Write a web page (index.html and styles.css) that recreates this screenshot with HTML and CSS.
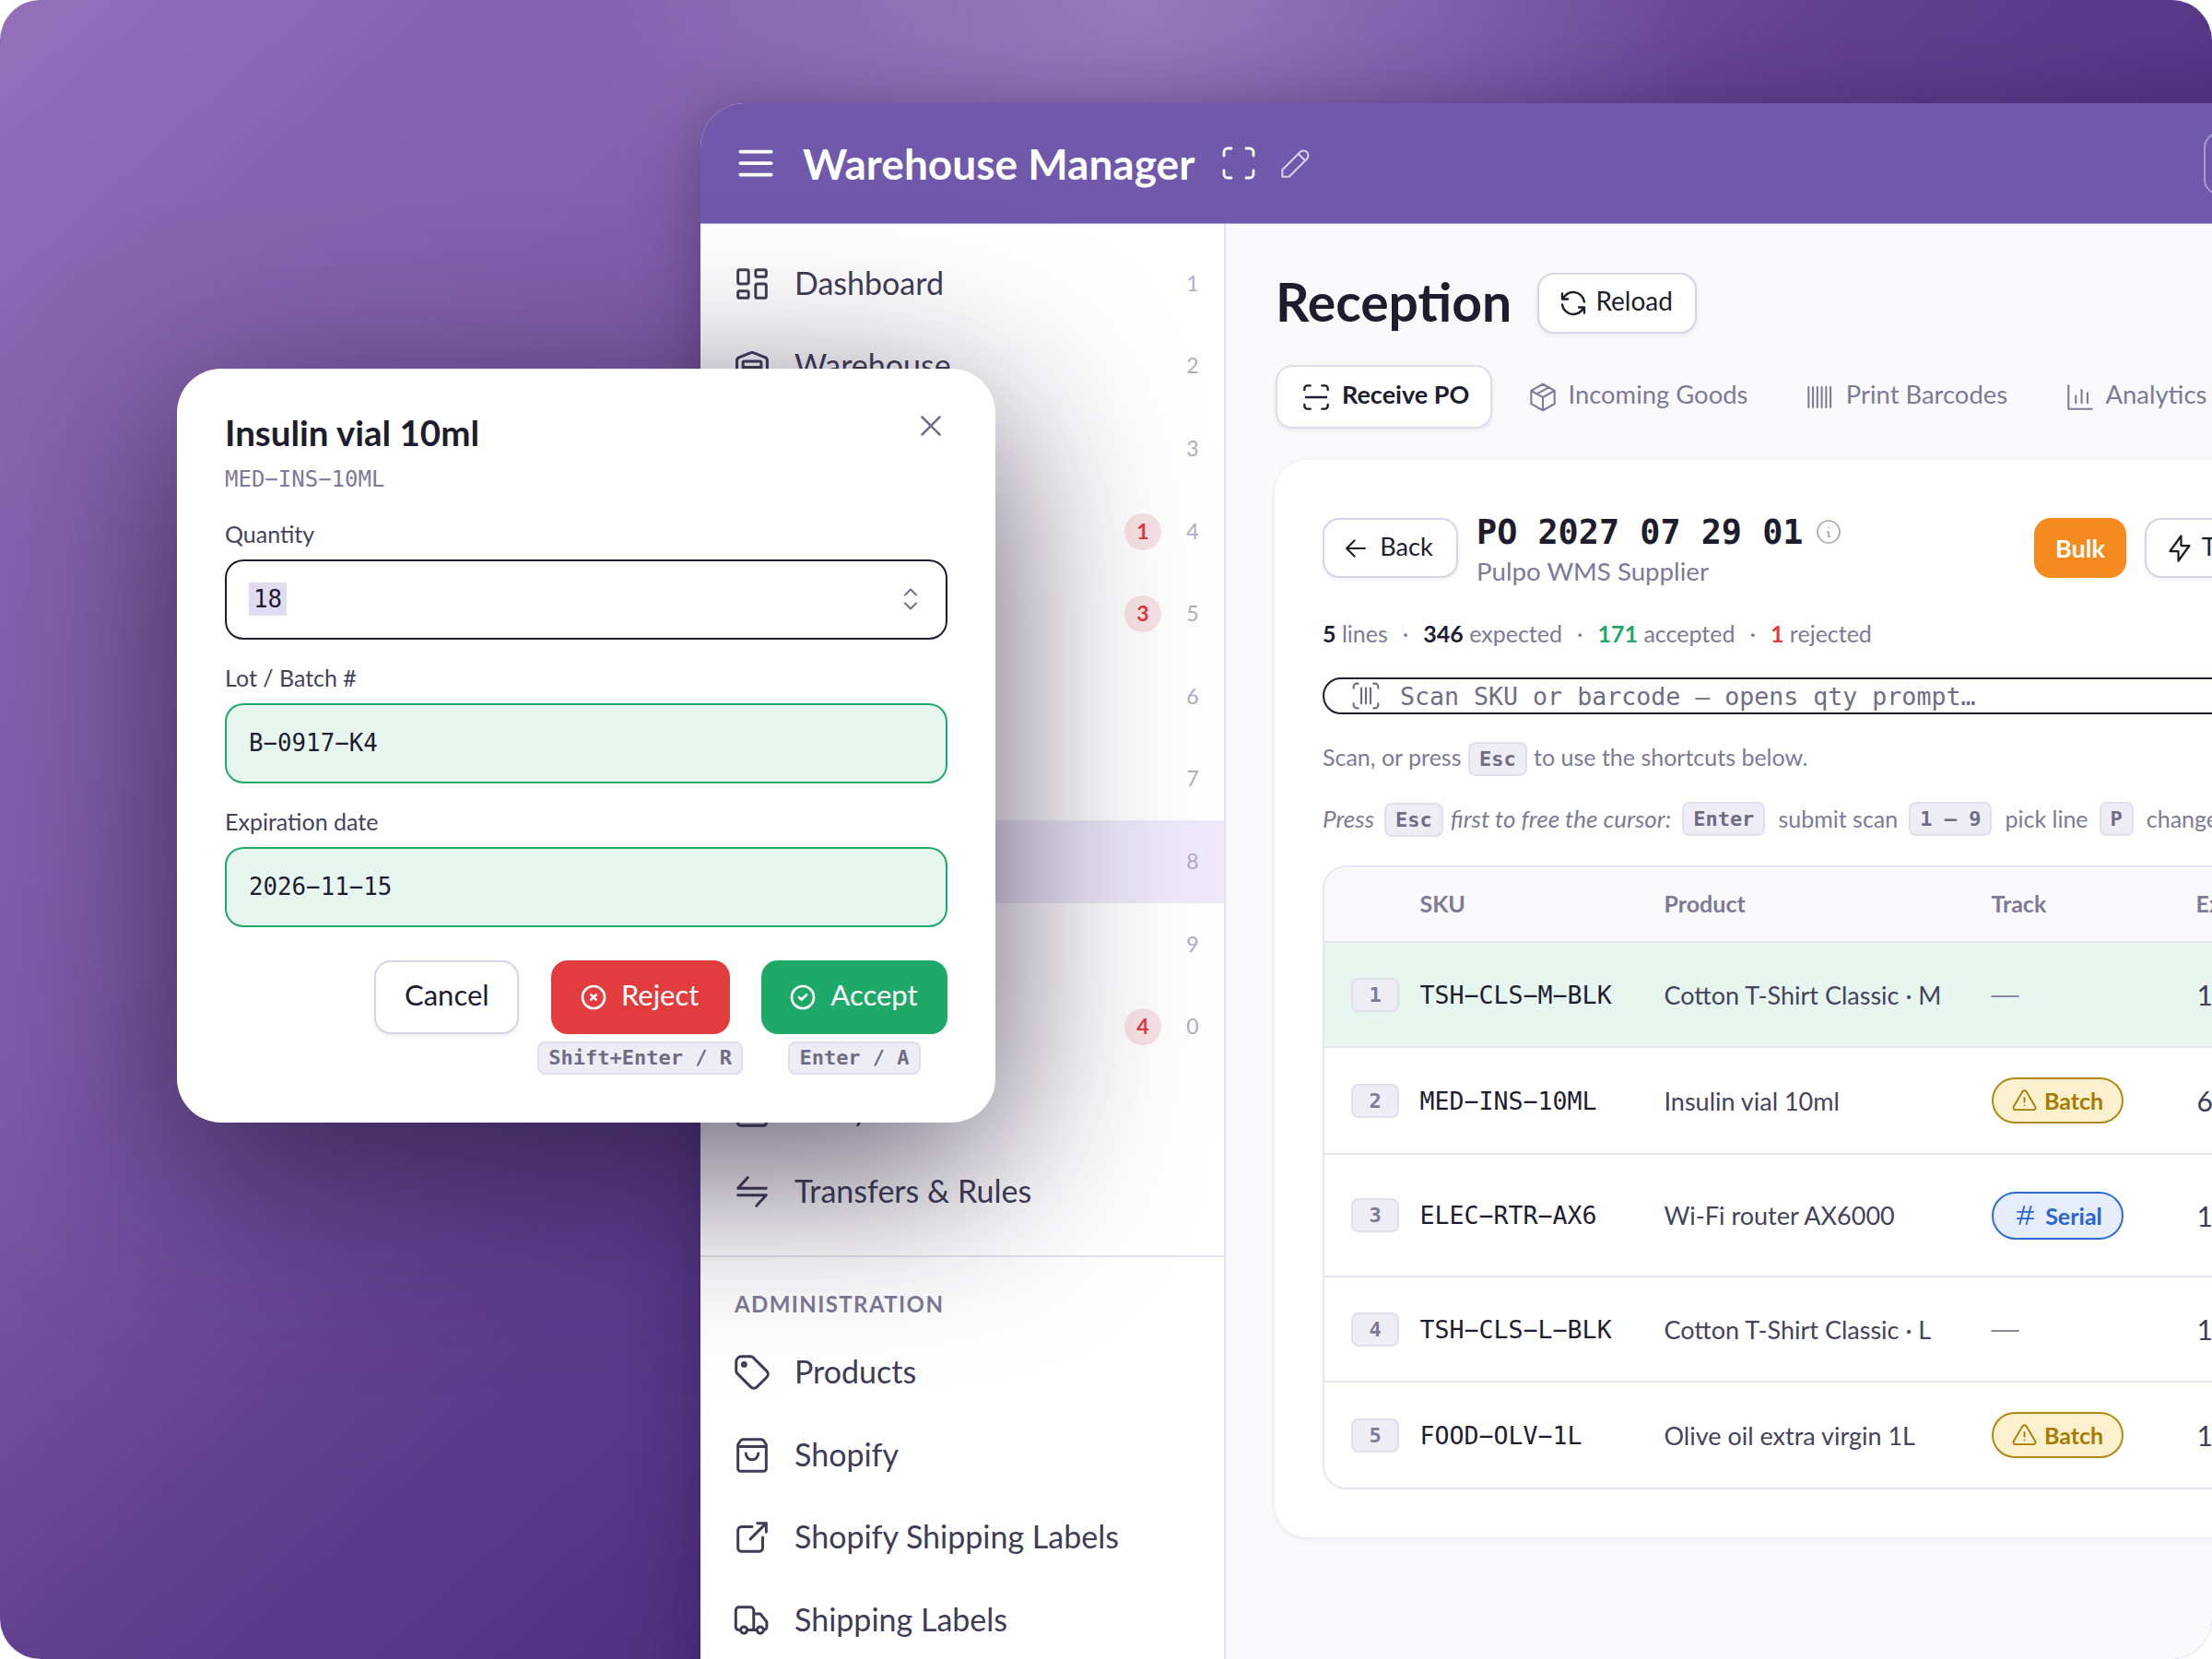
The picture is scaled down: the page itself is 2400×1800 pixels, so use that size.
FILE: index.html
```html
<!DOCTYPE html>
<html lang="en">
<head>
    <meta charset="UTF-8">
    <title>Warehouse Manager - Reception</title>
    <link rel="stylesheet" href="styles.css">
</head>
<body>
    <svg class="sprite" xmlns="http://www.w3.org/2000/svg">
        <symbol id="i-menu" viewBox="0 0 24 24"><path d="M4 6h16M4 12h16M4 18h16"/></symbol>
        <symbol id="i-max" viewBox="0 0 24 24"><path d="M4 8v-2a2 2 0 0 1 2 -2h2M4 16v2a2 2 0 0 0 2 2h2M16 4h2a2 2 0 0 1 2 2v2M16 20h2a2 2 0 0 0 2 -2v-2"/></symbol>
        <symbol id="i-pencil" viewBox="0 0 24 24"><path d="M4 20h4l10.5 -10.5a2.828 2.828 0 1 0 -4 -4l-10.5 10.5v4M13.5 6.5l4 4"/></symbol>
        <symbol id="i-dash" viewBox="0 0 24 24"><path d="M5 4h4a1 1 0 0 1 1 1v6a1 1 0 0 1 -1 1h-4a1 1 0 0 1 -1 -1v-6a1 1 0 0 1 1 -1M5 16h4a1 1 0 0 1 1 1v2a1 1 0 0 1 -1 1h-4a1 1 0 0 1 -1 -1v-2a1 1 0 0 1 1 -1M15 12h4a1 1 0 0 1 1 1v6a1 1 0 0 1 -1 1h-4a1 1 0 0 1 -1 -1v-6a1 1 0 0 1 1 -1M15 4h4a1 1 0 0 1 1 1v2a1 1 0 0 1 -1 1h-4a1 1 0 0 1 -1 -1v-2a1 1 0 0 1 1 -1"/></symbol>
        <symbol id="i-warehouse" viewBox="-2 -2 28 28"><path stroke-width="1.85" d="M18 21V10a1 1 0 0 0-1-1H7a1 1 0 0 0-1 1v11M22 19V8.35a2 2 0 0 0-1.26-1.86l-8-3.2a2 2 0 0 0-1.48 0l-8 3.2A2 2 0 0 0 2 8.35V19a2 2 0 0 0 2 2h16a2 2 0 0 0 2-2ZM6 13h12M6 17h12"/></symbol>
        <symbol id="i-transfer" viewBox="0 0 24 24"><path d="M20 10h-16l5.5 -6M4 14h16l-5.5 6"/></symbol>
        <symbol id="i-tag" viewBox="0 0 24 24"><path d="M6.5 7.5a1 1 0 1 0 2 0a1 1 0 1 0 -2 0M3 6v5.172a2 2 0 0 0 .586 1.414l7.71 7.71a2.41 2.41 0 0 0 3.408 0l5.592 -5.592a2.41 2.41 0 0 0 0 -3.408l-7.71 -7.71a2 2 0 0 0 -1.414 -.586h-5.172a3 3 0 0 0 -3 3z"/></symbol>
        <symbol id="i-bag" viewBox="0 0 24 24"><path d="M7 3h10a2 2 0 0 1 1.700 .9L20 6v13.500a1.500 1.500 0 0 1 -1.500 1.500H5.500a1.500 1.500 0 0 1 -1.500 -1.500V6l1.300 -2.100A2 2 0 0 1 7 3M4 7h16M8.500 11a3.500 3.500 0 0 0 7 0"/></symbol>
        <symbol id="i-external" viewBox="0 0 24 24"><path d="M12 6h-6a2 2 0 0 0 -2 2v10a2 2 0 0 0 2 2h10a2 2 0 0 0 2 -2v-6M11 13l9 -9M15 4h5v5"/></symbol>
        <symbol id="i-truck" viewBox="-1 -1 26 26"><path stroke-width="1.7" d="M5 18a2 2 0 1 0 4 0a2 2 0 1 0 -4 0M15 18a2 2 0 1 0 4 0a2 2 0 1 0 -4 0M5 18h-1a2 2 0 0 1 -2 -2v-10a2 2 0 0 1 2 -2h7a2 2 0 0 1 2 2v12M9 18h6M13 8h4l4 5v3a2 2 0 0 1 -2 2"/></symbol>
        <symbol id="i-refresh" viewBox="0 0 24 24"><path d="M20 11a8.100 8.100 0 0 0 -15.500 -2m-.5 -4v4h4M4 13a8.100 8.100 0 0 0 15.500 2m.5 4v-4h-4"/></symbol>
        <symbol id="i-scan" viewBox="0 0 24 24"><path d="M4 7v-1a2 2 0 0 1 2 -2h2M4 17v1a2 2 0 0 0 2 2h2M16 4h2a2 2 0 0 1 2 2v1M16 20h2a2 2 0 0 0 2 -2v-1M5 12h14"/></symbol>
        <symbol id="i-box" viewBox="0 0 24 24"><path d="M12 3l8 4.500v9l-8 4.500l-8 -4.500v-9l8 -4.500M12 12l8 -4.500M12 12v9M12 12l-8 -4.500M16 5.250l-8 4.500"/></symbol>
        <symbol id="i-barcode" viewBox="0 0 24 24"><path d="M4 5v14M7 5v14M10 5v14M13 5v14M16 5v14M19 5v14"/></symbol>
        <symbol id="i-chart" viewBox="0 0 24 24"><path d="M4 4v16h16M9 16v-5M13 16V7M17 16v-7"/></symbol>
        <symbol id="i-left" viewBox="0 0 24 24"><path d="M5 12h14M5 12l6 6M5 12l6 -6"/></symbol>
        <symbol id="i-info" viewBox="0 0 24 24"><path d="M3 12a9 9 0 1 0 18 0a9 9 0 0 0 -18 0M12 8.500h.01M11 12h1v4h1"/></symbol>
        <symbol id="i-bolt" viewBox="0 0 24 24"><path d="M13 3v7h6l-8 11v-7h-6l8 -11"/></symbol>
        <symbol id="i-codescan" viewBox="0 0 24 24"><path d="M4 7v-1a2 2 0 0 1 2 -2h1M4 17v1a2 2 0 0 0 2 2h1M17 4h1a2 2 0 0 1 2 2v1M17 20h1a2 2 0 0 0 2 -2v-1M9 7v10M12 7v10M15 7v10"/></symbol>
        <symbol id="i-close" viewBox="0 0 24 24"><path d="M18 6l-12 12M6 6l12 12"/></symbol>
        <symbol id="i-updown" viewBox="0 0 24 24"><path d="M8 9l4 -4l4 4M16 15l-4 4l-4 -4"/></symbol>
        <symbol id="i-xcircle" viewBox="0 0 24 24"><path d="M3 12a9 9 0 1 0 18 0a9 9 0 0 0 -18 0M10 10l4 4m0 -4l-4 4"/></symbol>
        <symbol id="i-check" viewBox="0 0 24 24"><path d="M3 12a9 9 0 1 0 18 0a9 9 0 0 0 -18 0M9 12l2 2l4 -4"/></symbol>
        <symbol id="i-alert" viewBox="0 0 24 24"><path d="M12 9v4M10.363 3.591l-8.106 13.534a1.914 1.914 0 0 0 1.636 2.871h16.214a1.914 1.914 0 0 0 1.636 -2.870l-8.106 -13.536a1.914 1.914 0 0 0 -3.274 0zM12 16h.01"/></symbol>
        <symbol id="i-hash" viewBox="0 0 24 24"><path d="M5 9h14M5 15h14M11 4l-4 16M17 4l-4 16"/></symbol>
    </svg>

    <div class="stage">
        <div class="app-window">
            <header class="topbar">
                <svg class="icon topbar-menu"><use href="#i-menu"/></svg>
                <span class="topbar-title">Warehouse Manager</span>
                <svg class="icon topbar-max"><use href="#i-max"/></svg>
                <svg class="icon topbar-edit"><use href="#i-pencil"/></svg>
                <span class="topbar-box"></span>
            </header>

            <div class="app-body">
                <aside class="sidebar">
                    <nav class="nav-main">
                        <a class="nav-row"><svg class="icon"><use href="#i-dash"/></svg><span class="nav-label">Dashboard</span><span class="nav-key">1</span></a>
                        <a class="nav-row"><svg class="icon"><use href="#i-warehouse"/></svg><span class="nav-label">Warehouse</span><span class="nav-key">2</span></a>
                        <a class="nav-row"><span class="nav-label nav-hidden">Stock</span><span class="nav-key">3</span></a>
                        <a class="nav-row"><span class="nav-label nav-hidden">Orders</span><span class="nav-badge">1</span><span class="nav-key">4</span></a>
                        <a class="nav-row"><span class="nav-label nav-hidden">Returns</span><span class="nav-badge">3</span><span class="nav-key">5</span></a>
                        <a class="nav-row"><span class="nav-label nav-hidden">Picking</span><span class="nav-key">6</span></a>
                        <a class="nav-row"><span class="nav-label nav-hidden">Packing</span><span class="nav-key">7</span></a>
                        <a class="nav-row nav-active"><span class="nav-label nav-hidden">Reception</span><span class="nav-key">8</span></a>
                        <a class="nav-row"><span class="nav-label nav-hidden">Counting</span><span class="nav-key">9</span></a>
                        <a class="nav-row"><span class="nav-label nav-hidden">Alerts</span><span class="nav-badge">4</span><span class="nav-key">0</span></a>
                        <a class="nav-row"><svg class="icon"><use href="#i-bag"/></svg><span class="nav-label">Entry</span></a>
                        <a class="nav-row"><svg class="icon"><use href="#i-transfer"/></svg><span class="nav-label">Transfers &amp; Rules</span></a>
                    </nav>
                    <div class="nav-admin">
                        <div class="nav-heading">ADMINISTRATION</div>
                        <a class="nav-row"><svg class="icon"><use href="#i-tag"/></svg><span class="nav-label">Products</span></a>
                        <a class="nav-row"><svg class="icon"><use href="#i-bag"/></svg><span class="nav-label">Shopify</span></a>
                        <a class="nav-row"><svg class="icon"><use href="#i-external"/></svg><span class="nav-label">Shopify Shipping Labels</span></a>
                        <a class="nav-row"><svg class="icon"><use href="#i-truck"/></svg><span class="nav-label">Shipping Labels</span></a>
                    </div>
                </aside>

                <main class="main">
                    <div class="page-head">
                        <h1>Reception</h1>
                        <button class="btn btn-reload"><svg class="icon"><use href="#i-refresh"/></svg>Reload</button>
                    </div>

                    <div class="tabs">
                        <div class="tab tab-active"><svg class="icon"><use href="#i-scan"/></svg>Receive PO</div>
                        <div class="tab"><svg class="icon"><use href="#i-box"/></svg>Incoming Goods</div>
                        <div class="tab"><svg class="icon"><use href="#i-barcode"/></svg>Print Barcodes</div>
                        <div class="tab"><svg class="icon"><use href="#i-chart"/></svg>Analytics</div>
                    </div>

                    <section class="card">
                        <div class="po-head">
                            <button class="btn btn-back"><svg class="icon"><use href="#i-left"/></svg>Back</button>
                            <div class="po-info">
                                <div class="po-number">PO 2027 07 29 01<svg class="icon"><use href="#i-info"/></svg></div>
                                <div class="po-supplier">Pulpo WMS Supplier</div>
                            </div>
                            <button class="btn btn-bulk">Bulk</button>
                            <button class="btn btn-turbo"><svg class="icon"><use href="#i-bolt"/></svg>Turbo</button>
                        </div>

                        <p class="stats"><b>5</b> lines<i>·</i><b>346</b> expected<i>·</i><b class="ok">171</b> accepted<i>·</i><b class="bad">1</b> rejected</p>

                        <div class="scan-box"><svg class="icon"><use href="#i-codescan"/></svg>Scan SKU or barcode — opens qty prompt…</div>

                        <div class="hint">Scan, or press <kbd class="kbd-inline">Esc</kbd> to use the shortcuts below.</div>
                        <div class="hint hint-keys">
                            <em class="hint-press">Press</em><kbd class="kbd-low">Esc</kbd><em>first to free the cursor:</em>
                            <kbd class="kbd-gap">Enter</kbd><span>submit scan</span>
                            <kbd class="kbd-gap">1 – 9</kbd><span>pick line</span>
                            <kbd class="kbd-gap">P</kbd><span>change qty</span>
                        </div>

                        <div class="table-wrap">
                            <table class="lines">
                                <colgroup><col class="col-key"><col class="col-sku"><col class="col-product"><col class="col-track"><col></colgroup>
                                <thead>
                                    <tr><th></th><th>SKU</th><th>Product</th><th>Track</th><th>Expected</th></tr>
                                </thead>
                                <tbody>
                                    <tr class="row-done">
                                        <td><span class="line-key">1</span></td>
                                        <td class="sku">TSH−CLS−M−BLK</td>
                                        <td>Cotton T-Shirt Classic · M</td>
                                        <td class="no-track">—</td>
                                        <td class="qty">120</td>
                                    </tr>
                                    <tr class="row-batch">
                                        <td><span class="line-key">2</span></td>
                                        <td class="sku">MED−INS−10ML</td>
                                        <td>Insulin vial 10ml</td>
                                        <td><span class="pill pill-batch"><svg class="icon"><use href="#i-alert"/></svg>Batch</span></td>
                                        <td class="qty">60</td>
                                    </tr>
                                    <tr class="row-serial">
                                        <td><span class="line-key">3</span></td>
                                        <td class="sku">ELEC−RTR−AX6</td>
                                        <td>Wi-Fi router AX6000</td>
                                        <td><span class="pill pill-serial"><svg class="icon"><use href="#i-hash"/></svg>Serial</span></td>
                                        <td class="qty">15</td>
                                    </tr>
                                    <tr>
                                        <td><span class="line-key">4</span></td>
                                        <td class="sku">TSH−CLS−L−BLK</td>
                                        <td>Cotton T-Shirt Classic · L</td>
                                        <td class="no-track">—</td>
                                        <td class="qty">110</td>
                                    </tr>
                                    <tr>
                                        <td><span class="line-key">5</span></td>
                                        <td class="sku">FOOD−OLV−1L</td>
                                        <td>Olive oil extra virgin 1L</td>
                                        <td><span class="pill pill-batch"><svg class="icon"><use href="#i-alert"/></svg>Batch</span></td>
                                        <td class="qty">18</td>
                                    </tr>
                                </tbody>
                            </table>
                        </div>
                    </section>
                </main>
            </div>
        </div>

        <div class="modal">
            <div class="modal-head">
                <div>
                    <h2>Insulin vial 10ml</h2>
                    <div class="modal-sku">MED−INS−10ML</div>
                </div>
                <svg class="icon modal-close"><use href="#i-close"/></svg>
            </div>

            <label class="field-label">Quantity</label>
            <div class="field field-focus"><span class="field-selected">18</span><svg class="icon"><use href="#i-updown"/></svg></div>

            <label class="field-label">Lot / Batch #</label>
            <div class="field field-valid">B−0917−K4</div>

            <label class="field-label">Expiration date</label>
            <div class="field field-valid">2026−11−15</div>

            <div class="modal-actions">
                <div class="action"><button class="btn btn-cancel">Cancel</button></div>
                <div class="action">
                    <button class="btn btn-reject"><svg class="icon"><use href="#i-xcircle"/></svg>Reject</button>
                    <kbd>Shift+Enter / R</kbd>
                </div>
                <div class="action">
                    <button class="btn btn-accept"><svg class="icon"><use href="#i-check"/></svg>Accept</button>
                    <kbd>Enter / A</kbd>
                </div>
            </div>
        </div>
    </div>
</body>
</html>
```

FILE: styles.css
```css
* {
    box-sizing: border-box;
}
body {
    margin: 0;
    background-color: #ffffff;
    font-family: "Lato", "Noto Sans", sans-serif;
    color: #1e1d2e;
}
.sprite {
    display: none;
}
.icon {
    width: 32px;
    height: 32px;
    flex-shrink: 0;
    fill: none;
    stroke: currentColor;
    stroke-width: 2;
    stroke-linecap: round;
    stroke-linejoin: round;
}
.stage {
    position: relative;
    width: 2400px;
    height: 1800px;
    overflow: hidden;
    border-radius: 44px;
    background:
        radial-gradient(ellipse 620px 420px at 1230px 0, rgba(190, 180, 225, 0.32), rgba(190, 180, 225, 0)),
        linear-gradient(138deg, #9470b9 0%, #8765ae 12%, #7f5ca8 30%, #624090 46%, #583889 54%, #4e2d7e 65%, #3e2368 100%);
}

/* app window */
.app-window {
    position: absolute;
    left: 760px;
    top: 112px;
    width: 1822px;
    height: 1800px;
    border-radius: 48px 48px 0 0;
    background-color: #ffffff;
    box-shadow: 0 10px 70px rgba(30, 20, 60, 0.4);
}
.topbar {
    display: flex;
    align-items: center;
    height: 131px;
    padding-left: 35px;
    border-radius: 48px 48px 0 0;
    background-color: #7058aa;
    border-bottom: 1px solid #a99ad2;
    color: #ffffff;
}
.topbar-menu {
    width: 50px;
    height: 50px;
    stroke-width: 1.8;
}
.topbar-title {
    margin-left: 26px;
    font-size: 46px;
    font-weight: 700;
}
.topbar-max {
    margin-left: 24px;
    width: 48px;
    height: 48px;
    stroke-width: 1.4;
}
.topbar-edit {
    margin-left: 16px;
    width: 44px;
    height: 44px;
    stroke-width: 1.1;
    color: #d9d2ee;
}
.topbar-box {
    margin-left: auto;
    margin-right: 31px;
    width: 160px;
    height: 67px;
    border: 2px solid #a99ad2;
    border-radius: 16px;
}
.app-body {
    display: flex;
}

/* sidebar */
.sidebar {
    width: 570px;
    height: 1560px;
    flex-shrink: 0;
    padding-top: 20px;
    background-color: #ffffff;
    border-right: 2px solid #e4e2f0;
}
.nav-main {
    padding-bottom: 24px;
    border-bottom: 2px solid #e4e2f0;
}
.nav-row {
    display: flex;
    align-items: center;
    height: 89.6px;
    padding: 0 22px 0 33px;
    font-size: 34px;
    color: #3f3d56;
}
.nav-row .icon {
    width: 46px;
    height: 46px;
    stroke-width: 1.55;
}
.nav-label {
    margin-left: 23px;
    margin-bottom: 3px;
    flex: 1;
}
.nav-hidden {
    margin-left: 69px;
}
.nav-key {
    width: 24px;
    margin-bottom: 2px;
    text-align: center;
    font-size: 23px;
    color: #b0adc5;
}
.nav-badge {
    width: 40px;
    height: 40px;
    margin-right: 22px;
    border-radius: 50%;
    background-color: #f7e3e4;
    color: #e03a3e;
    font-size: 23px;
    font-weight: 700;
    line-height: 38px;
    text-align: center;
}
.nav-active {
    background-color: #ede9f8;
}
.nav-heading {
    margin: 37px 0 15px 37px;
    font-size: 24px;
    line-height: 28px;
    font-weight: 700;
    letter-spacing: 1.4px;
    color: #7e7b96;
}

/* main column */
.main {
    flex: 1;
    height: 1560px;
    padding: 53px 53px 0;
    background-color: #f9f9fc;
}
.page-head {
    display: flex;
    align-items: center;
    gap: 28px;
    height: 66px;
}
h1 {
    margin: 0 0 4px 1px;
    font-size: 57px;
    font-weight: 700;
}
.btn {
    display: inline-flex;
    align-items: center;
    justify-content: center;
    padding: 0 0 4px;
    border: 2px solid #d6d4e6;
    border-radius: 18px;
    background-color: #ffffff;
    color: #1e1d2e;
    font-family: inherit;
    font-size: 27px;
    box-shadow: 0 2px 4px rgba(40, 30, 80, 0.08);
}
.btn .icon {
    margin-top: 4px;
}
.btn-reload {
    width: 173px;
    height: 66px;
    gap: 6px;
    padding: 0 5px 7px 0;
    font-size: 28px;
}
.btn-reload .icon {
    width: 36px;
    height: 36px;
    margin-top: 7px;
    stroke-width: 1.6;
}
.tabs {
    display: flex;
    align-items: center;
    margin: 34px 0 0 1px;
    height: 69px;
    gap: 11.5px;
}
.tab {
    display: flex;
    align-items: center;
    gap: 9px;
    height: 69px;
    padding: 0 24px 6px;
    border-radius: 18px;
    font-size: 27.4px;
    white-space: nowrap;
    color: #7d7a96;
}
.tab .icon {
    width: 38px;
    height: 38px;
    margin-top: 6px;
    stroke-width: 1.3;
}
.tab-active {
    width: 235px;
    padding: 0 0 6px 23px;
    background-color: #ffffff;
    border: 2px solid #dedcec;
    color: #1e1d2e;
    font-size: 27px;
    font-weight: 700;
    box-shadow: 0 2px 4px rgba(40, 30, 80, 0.08);
}
.tab-active .icon {
    stroke-width: 1.5;
}
.card {
    margin-top: 34px;
    height: 1169px;
    padding: 56px 52px 0;
    background-color: #ffffff;
    border-radius: 36px;
    box-shadow: 0 2px 6px rgba(40, 30, 80, 0.08);
}
.po-head {
    display: flex;
    align-items: center;
}
.btn-back {
    width: 147px;
    height: 65px;
    gap: 9px;
    padding-right: 8px;
}
.btn-back .icon {
    width: 34px;
    height: 34px;
    stroke-width: 1.5;
}
.po-info {
    flex: 1;
    margin-left: 20px;
}
.po-number {
    display: flex;
    align-items: center;
    gap: 12px;
    height: 44px;
    font-family: "DejaVu Sans Mono", monospace;
    font-size: 36.8px;
    font-weight: 700;
}
.po-number .icon {
    width: 32px;
    height: 32px;
    stroke-width: 1.3;
    color: #a9a6c0;
}
.po-supplier {
    margin-top: 6px;
    font-size: 27.7px;
    line-height: 29px;
    color: #7d7a96;
}
.btn-bulk {
    width: 100px;
    height: 65px;
    padding: 0;
    border: none;
    background-color: #f58a1f;
    color: #ffffff;
    font-weight: 700;
    box-shadow: none;
}
.btn-turbo {
    width: 150px;
    height: 65px;
    margin-left: 20px;
    gap: 6px;
}
.btn-turbo .icon {
    width: 36px;
    height: 36px;
    stroke-width: 1.5;
}
.stats {
    margin: 36px 0 0;
    font-size: 25px;
    line-height: 34px;
    color: #7d7a96;
}
.stats b {
    color: #1e1d2e;
}
.stats i {
    margin: 0 16px;
    font-style: normal;
}
.stats .ok {
    color: #1fa968;
}
.stats .bad {
    color: #e03a3e;
}
.scan-box {
    display: flex;
    align-items: center;
    gap: 17px;
    height: 40px;
    margin-top: 31px;
    padding-left: 25px;
    border: 2.5px solid #1e1d2e;
    border-radius: 20px;
    font-family: "DejaVu Sans Mono", monospace;
    font-size: 26.6px;
    color: #6f6d85;
}
.scan-box .icon {
    width: 40px;
    height: 40px;
    stroke-width: 1.3;
}
.hint {
    margin-top: 27px;
    font-size: 25px;
    line-height: 38px;
    color: #7d7a96;
    white-space: nowrap;
}
kbd {
    display: inline-block;
    height: 37px;
    padding: 0 10px;
    border: 2px solid #e0dfeb;
    border-radius: 8px;
    background-color: #eeedf5;
    font-family: "DejaVu Sans Mono", monospace;
    font-size: 22px;
    font-weight: 700;
    line-height: 33px;
    color: #6f6d85;
}
.kbd-inline {
    margin: 0 1px;
}
.hint-keys {
    display: flex;
    align-items: center;
    gap: 8px;
}
.hint-keys em {
    font-size: 26px;
}
.hint-press {
    margin-right: 3px;
}
.kbd-gap {
    margin-left: 4px;
    margin-right: 6px;
}
.kbd-low {
    position: relative;
    top: 1px;
}
.table-wrap {
    margin-top: 32px;
    border: 2px solid #e7e6f0;
    border-radius: 26px;
    overflow: hidden;
}
.lines {
    width: 100%;
    table-layout: fixed;
    border-collapse: separate;
    border-spacing: 0;
    font-size: 27px;
    color: #45435a;
}
.col-key {
    width: 103.5px;
}
.col-sku {
    width: 265px;
}
.col-product {
    width: 355px;
}
.col-track {
    width: 222px;
}
.lines th {
    height: 82px;
    padding: 0 0 2px;
    background-color: #f9f9fc;
    border-bottom: 2px solid #e7e6f0;
    font-size: 25px;
    font-weight: 700;
    text-align: left;
    color: #7d7a96;
}
.lines td {
    height: 114px;
    padding: 0;
    border-bottom: 2px solid #e7e6f0;
    white-space: nowrap;
}
.lines tr:last-child td {
    border-bottom: none;
}
.row-done td {
    background-color: #e6f6ee;
}
.row-batch td {
    height: 116px;
}
.row-serial td {
    height: 133px;
}
.line-key {
    display: block;
    width: 52px;
    height: 37px;
    margin-left: 29px;
    border: 2px solid #e0dfeb;
    border-radius: 8px;
    background-color: #eeedf5;
    font-family: "DejaVu Sans Mono", monospace;
    font-size: 22px;
    font-weight: 700;
    line-height: 33px;
    text-align: center;
    color: #7d7a96;
}
.sku {
    font-family: "DejaVu Sans Mono", monospace;
    font-size: 26.6px;
    color: #1e1d2e;
}
.no-track {
    font-family: "Liberation Sans", sans-serif;
    font-size: 30px;
    color: #8c8aa0;
}
.lines .qty {
    padding-left: 1px;
    font-size: 30px;
    color: #3f3d56;
}
.pill {
    display: inline-flex;
    align-items: center;
    justify-content: center;
    gap: 7px;
    width: 143px;
    height: 50px;
    border: 2px solid;
    border-radius: 26px;
    font-size: 25px;
    font-weight: 700;
}
.pill .icon {
    width: 29px;
    height: 29px;
    stroke-width: 1.5;
}
.pill-batch {
    background-color: #faf0cd;
    border-color: #b08a10;
    color: #a67c00;
}
.pill-serial {
    height: 52px;
    background-color: #e5edfb;
    border-color: #2e6bd9;
    color: #2b63d1;
}

/* dialog */
.modal {
    position: absolute;
    left: 192px;
    top: 400px;
    width: 888px;
    height: 818px;
    padding: 45px 52px 0;
    border-radius: 48px;
    background-color: #ffffff;
    box-shadow: 0 50px 200px rgba(30, 20, 50, 0.7);
}
.modal-head {
    display: flex;
    justify-content: space-between;
    height: 107px;
}
h2 {
    margin: 0;
    font-size: 38.500px;
    line-height: 48px;
    font-weight: 700;
}
.modal-sku {
    margin-top: 13px;
    font-family: "DejaVu Sans Mono", monospace;
    font-size: 24px;
    line-height: 28px;
    color: #7d7a96;
}
.modal-close {
    width: 38px;
    height: 38px;
    margin-top: -2px;
    margin-right: -1px;
    stroke-width: 1.6;
    color: #6f6d85;
}
.field-label {
    display: block;
    margin-top: 12px;
    margin-bottom: 12.5px;
    font-size: 25px;
    line-height: 30px;
    color: #45435a;
}
.field {
    display: flex;
    align-items: center;
    justify-content: space-between;
    height: 87px;
    padding: 0 20px 0 24px;
    border-radius: 20px;
    font-family: "DejaVu Sans Mono", monospace;
    font-size: 25.8px;
}
.field + .field-label {
    margin-top: 26.5px;
}
.field-focus {
    border: 2.5px solid #1e1d2e;
}
.field-focus .icon {
    width: 36px;
    height: 36px;
    stroke-width: 1.3;
    color: #6f6d85;
}
.field-selected {
    padding: 3px 5px;
    background-color: #e2dcf3;
}
.field-valid {
    border: 2.5px solid #1fa968;
    background-color: #e6f6ee;
}
.modal-actions {
    display: flex;
    justify-content: flex-end;
    gap: 20px;
    margin-top: 36px;
}
.action {
    display: flex;
    flex-direction: column;
    align-items: center;
    gap: 8px;
}
.action kbd {
    height: 36px;
    line-height: 32px;
}
.btn-cancel {
    width: 157px;
    height: 80px;
    padding-bottom: 6px;
    font-size: 31px;
}
.btn-reject,
.btn-accept {
    height: 80px;
    gap: 14px;
    padding: 0 3px 6px 0;
    border: none;
    color: #ffffff;
    font-size: 31px;
    box-shadow: none;
}
.btn-reject .icon,
.btn-accept .icon {
    margin-top: 6px;
}
.btn-reject {
    width: 194px;
    background-color: #e33c3f;
}
.btn-accept {
    width: 202px;
    background-color: #1fa968;
}
```
